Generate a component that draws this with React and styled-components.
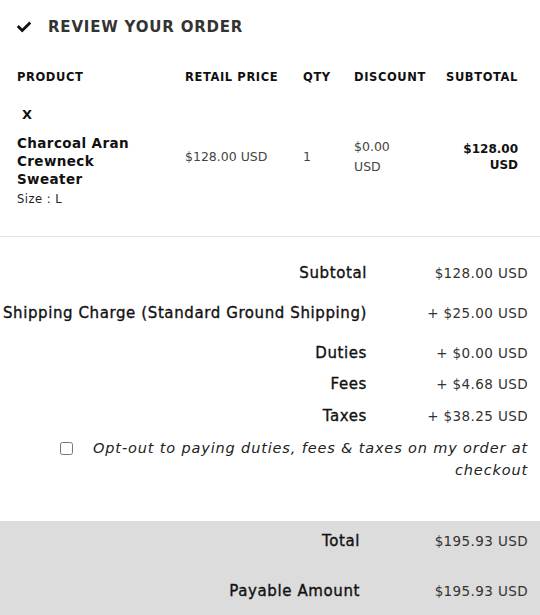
import React from 'react';
import styled, { createGlobalStyle } from 'styled-components';
import { FaCheck } from 'react-icons/fa';

const Global = createGlobalStyle`
  body {
    margin: 0;
    background: #fff;
    font-family: "DejaVu Sans", "Noto Sans", sans-serif;
    color: #222;
  }
`;

const Page = styled.div`
  width: 540px;
  height: 615px;
  overflow: hidden;
  display: flex;
  flex-direction: column;
`;

const Header = styled.div`
  display: flex;
  align-items: center;
  gap: 17px;
  padding: 18px 17px 0;
  height: 20px;
  font-size: 15px;
  font-weight: bold;
  letter-spacing: 0.8px;
  color: #333;
  svg {
    width: 14px;
    height: 14px;
    color: #111;
  }
`;

const Table = styled.div`
  display: grid;
  grid-template-columns: 168px 118px 51px 92px 1fr;
  padding: 0 22px 0 17px;
`;

const Th = styled.div`
  margin-top: 34px;
  font-size: 11.5px;
  font-weight: bold;
  letter-spacing: 0.6px;
  color: #111;
  text-align: ${(p) => (p.$right ? 'right' : 'left')};
`;

const Remove = styled.div`
  grid-column: 1 / -1;
  margin: 23px 0 0 5px;
  font-size: 13px;
  font-weight: bold;
  color: #111;
`;

const Cell = styled.div`
  margin-top: 12px;
  padding-top: ${(p) => p.$top || 0}px;
  font-size: 12.5px;
  line-height: 20px;
  color: #444;
  text-align: ${(p) => (p.$right ? 'right' : 'left')};
`;

const BoldCell = styled(Cell)`
  font-size: 12px;
  line-height: 16px;
  font-weight: bold;
  color: #111;
`;

const ProductName = styled.div`
  font-size: 13.5px;
  font-weight: bold;
  line-height: 18px;
  letter-spacing: 0.4px;
  color: #111;
`;

const Size = styled.div`
  margin-top: 2px;
  font-size: 11.5px;
  line-height: 18px;
  letter-spacing: 0.5px;
  color: #222;
`;

const Divider = styled.hr`
  margin: 28px 0 0;
  border: none;
  border-top: 1px solid #e2e2e2;
`;

const Summary = styled.div`
  display: grid;
  grid-template-columns: 1fr 161px;
  padding-top: ${(p) => p.$top || 0}px;
`;

const Label = styled.div`
  text-align: right;
  font-size: 15px;
  letter-spacing: 0.6px;
  -webkit-text-stroke: 0.35px #111;
  color: #111;
  height: ${(p) => p.$h || 40}px;
  line-height: 20px;
  padding-right: ${(p) => p.$pr || 12}px;
  white-space: nowrap;
`;

const Value = styled.div`
  text-align: right;
  font-size: 13.5px;
  letter-spacing: 0.4px;
  color: #333;
  padding-right: 12px;
  height: ${(p) => p.$h || 40}px;
  line-height: 20px;
`;

const OptOut = styled.label`
  grid-column: 1 / -1;
  display: flex;
  align-items: flex-start;
  gap: 12px;
  padding: 0 12px 0 60px;
  font-size: 14.5px;
  font-style: italic;
  line-height: 22px;
  letter-spacing: 0.85px;
  color: #222;
  text-align: right;
  input {
    margin: 5px 0 0;
    width: 13px;
    height: 13px;
    flex: none;
  }
  span {
    flex: 1;
  }
`;

const Band = styled.div`
  margin-top: 40px;
  flex: 1;
  background: #dcdcdc;
  padding-top: 10px;
`;

const rows = [
  ['Subtotal', '$128.00 USD', 40],
  ['Shipping Charge (Standard Ground Shipping)', '+ $25.00 USD', 40],
  ['Duties', '+ $0.00 USD', 31],
  ['Fees', '+ $4.68 USD', 32],
  ['Taxes', '+ $38.25 USD', 31],
];

export default function App() {
  return (
    <Page>
      <Global />
      <Header>
        <FaCheck />
        REVIEW YOUR ORDER
      </Header>
      <Table>
        <Th>PRODUCT</Th>
        <Th>RETAIL PRICE</Th>
        <Th>QTY</Th>
        <Th>DISCOUNT</Th>
        <Th $right>SUBTOTAL</Th>
        <Remove>X</Remove>
        <Cell>
          <ProductName>
            Charcoal Aran
            <br />
            Crewneck
            <br />
            Sweater
          </ProductName>
          <Size>Size : L</Size>
        </Cell>
        <Cell $top={13}>$128.00 USD</Cell>
        <Cell $top={13}>1</Cell>
        <Cell $top={3}>
          $0.00
          <br />
          USD
        </Cell>
        <BoldCell $right $top={7}>
          $128.00
          <br />
          USD
        </BoldCell>
      </Table>
      <Divider />
      <Summary $top={26}>
        {rows.map(([l, v, h]) => (
          <React.Fragment key={l}>
            <Label $h={h}>{l}</Label>
            <Value $h={h}>{v}</Value>
          </React.Fragment>
        ))}
        <OptOut>
          <input type="checkbox" />
          <span>Opt-out to paying duties, fees &amp; taxes on my order at checkout</span>
        </OptOut>
      </Summary>
      <Band>
        <Summary>
          <Label $h={50} $pr={19}>Total</Label>
          <Value $h={50}>$195.93 USD</Value>
          <Label $h={50} $pr={19}>Payable Amount</Label>
          <Value $h={50}>$195.93 USD</Value>
        </Summary>
      </Band>
    </Page>
  );
}
